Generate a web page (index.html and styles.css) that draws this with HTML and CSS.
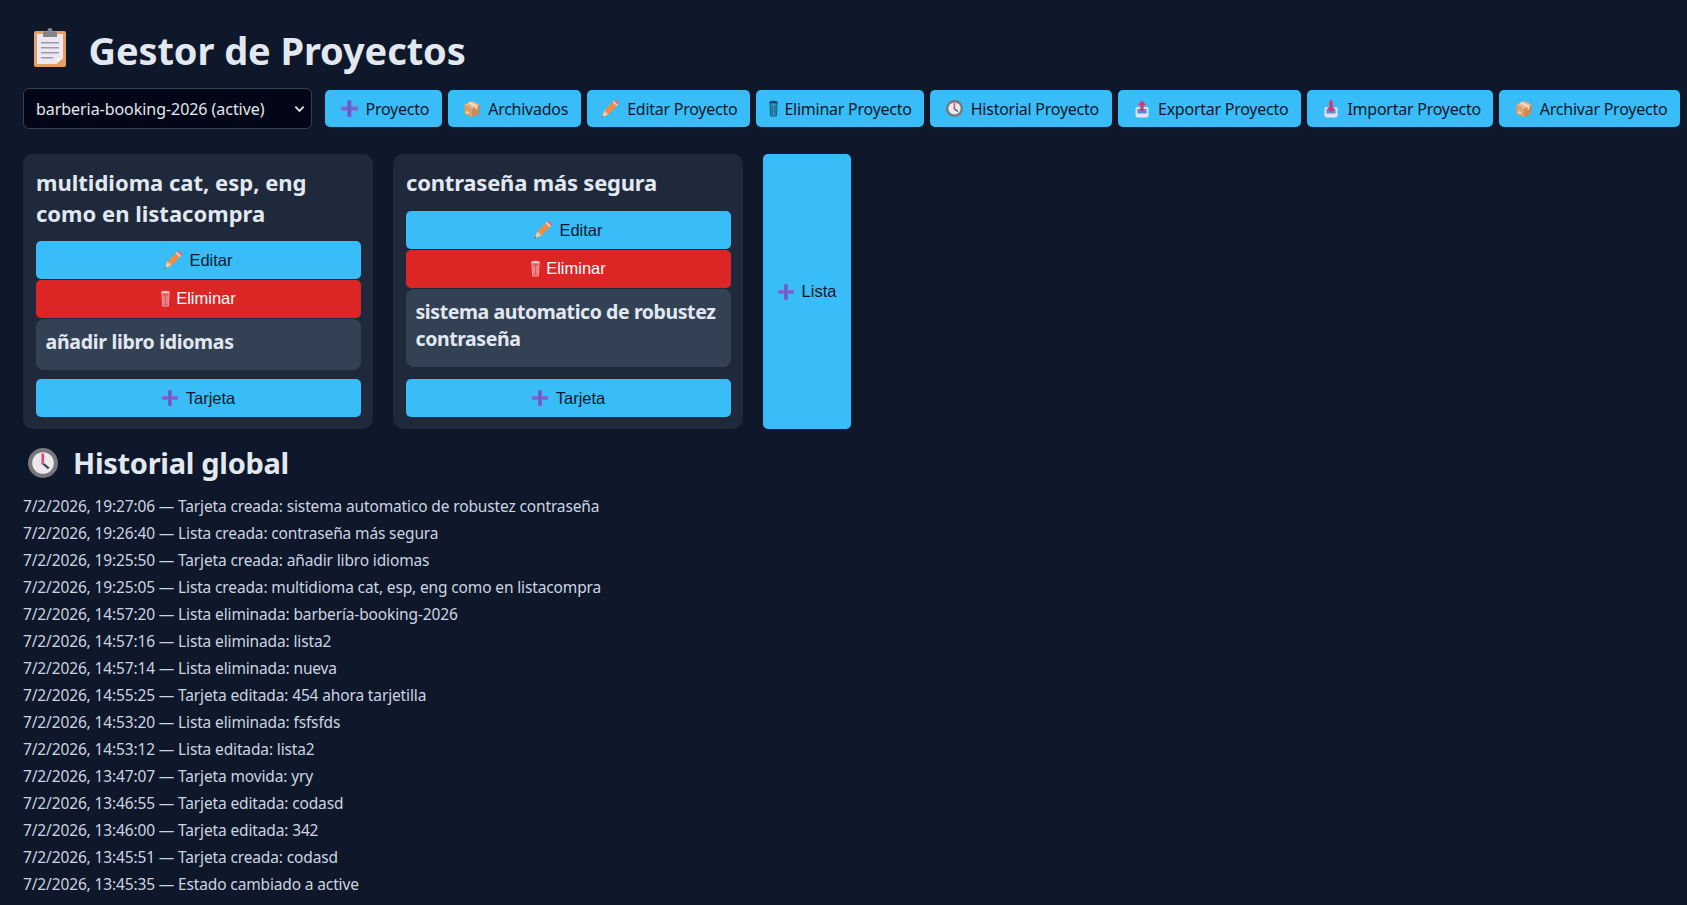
FILE: index.html
```html
<!DOCTYPE html>
<html lang="es">
<head>
<meta charset="utf-8">
<title>Gestor de Proyectos</title>
<link rel="stylesheet" href="styles.css">
</head>
<body>
<svg class="defs" width="0" height="0" aria-hidden="true">
  <symbol id="i-plus" viewBox="0 0 16 16">
    <rect x="0" y="6" width="16" height="4" fill="#8470d8"/>
    <rect x="6" y="0" width="4" height="16" fill="#7a68d4"/>
    <rect x="6.800" y="1" width="1.600" height="14" fill="#5a58c4"/>
    <rect x="1" y="7.400" width="14" height="1.400" fill="#6660cc"/>
  </symbol>
  <symbol id="i-box" viewBox="0 0 16 18">
    <path d="M8 1 15.500 4.800v8.600L8 17.400.5 13.400V4.800Z" fill="#c98a55"/>
    <path d="M8 1 15.500 4.800 8 9 .5 4.800Z" fill="#e8b98c"/>
    <path d="M8 9v8.400L.5 13.400V4.800Z" fill="#dba26d"/>
    <path d="M4 2.900 11.600 7v3l1.800-1V6L5.800 2Z" fill="#f5e3cf"/>
    <rect x="2" y="11.500" width="3" height="2" fill="#f3ddc4" transform="rotate(28 3.500 12.500)"/>
  </symbol>
  <symbol id="i-pencil" viewBox="0 0 17 17">
    <path d="M3.200 10 11 2.200 14.800 6 7 13.800Z" fill="#f58b3c"/>
    <path d="M3.200 10 7 13.800.4 16.600Z" fill="#f7c99a"/>
    <path d="M1.200 14.600 2.400 15.800.4 16.600Z" fill="#6b4a3a"/>
    <path d="M11 2.200 12.400 .8 16.200 4.600 14.800 6Z" fill="#f3c3c8"/>
    <path d="M12.400 .8 13 .2Q13.800-.3 14.600 .2L16.800 2.400Q17.300 3.200 16.800 4L16.200 4.600Z" fill="#ec6a5e"/>
  </symbol>
  <symbol id="i-trash" viewBox="0 0 10 18">
    <path d="M.4 1.200Q5-.4 9.600 1.200V3.400H.4Z" fill="currentColor" opacity=".7"/>
    <path d="M1 3.400h8L8.200 17.400H1.800Z" fill="currentColor" opacity=".22"/>
    <path d="M1 3.400 1.800 17.400H8.200L9 3.400" fill="none" stroke="currentColor" stroke-width=".9" opacity=".65"/>
    <path d="M3.400 5.500v10M6.600 5.500v10" stroke="currentColor" stroke-width=".9" opacity=".65"/>
  </symbol>
  <symbol id="i-clock" viewBox="0 0 30 30">
    <circle cx="15" cy="15" r="15" fill="#77787e"/>
    <circle cx="15" cy="15" r="10.800" fill="#ece8ec"/>
    <rect x="13.500" y="5.500" width="2.600" height="10" fill="#e0447a"/>
    <path d="M14.600 14 21.500 19.600 20 21.200 13.400 15.600Z" fill="#3c3f52"/>
    <circle cx="14.800" cy="15" r="1.600" fill="#8d8f96"/>
  </symbol>
  <symbol id="i-out" viewBox="0 0 16 18">
    <path d="M1.500 8.500Q1.500 7 3 7h10Q14.500 7 14.500 8.500v7Q14.500 17.500 12.500 17.500h-9Q1.500 17.500 1.500 15.500Z" fill="#e4dff0"/>
    <path d="M3.500 9h9v4.500h-9Z" fill="#5b86d2"/>
    <path d="M8 .5 12 5H9.600v6H6.400V5H4Z" fill="#d9316b"/>
  </symbol>
  <symbol id="i-in" viewBox="0 0 16 18">
    <path d="M1.500 8.500Q1.500 7 3 7h10Q14.500 7 14.500 8.500v7Q14.500 17.500 12.500 17.500h-9Q1.500 17.500 1.500 15.500Z" fill="#e4dff0"/>
    <path d="M3.500 9h9v4.500h-9Z" fill="#5b86d2"/>
    <path d="M6.400 .5h3.200v7H12L8 12 4 7.500h2.400Z" fill="#d9316b"/>
  </symbol>
  <symbol id="i-clip" viewBox="0 0 32 39">
    <rect x="0" y="3" width="32" height="36" rx="2" fill="#e2a066"/>
    <path d="M3 6h26v24l-7 6H3Z" fill="#ebe7f3"/>
    <path d="M22 36l1-6h6Z" fill="#f8f3ea"/>
    <path d="M9 5Q9 3.500 11 3.500h2.500V2Q13.500 0 16 0t2.500 2v1.500H21Q23 3.500 23 5v4H9Z" fill="#85828c"/>
    <path d="M7 14h18v1.600H7ZM7 19h18v1.600H7ZM7 24h18v1.600H7ZM7 29h12v1.600H7Z" fill="#9d9aa8"/>
  </symbol>
</svg>

<main class="app">
  <h1 class="title"><svg class="title-icon"><use href="#i-clip"/></svg>Gestor de Proyectos</h1>

  <div class="toolbar">
    <select class="project-select">
      <option>barberia-booking-2026 (active)</option>
    </select>
    <button class="btn"><span class="ico"><svg class="s-plus"><use href="#i-plus"/></svg></span>Proyecto</button>
    <button class="btn"><span class="ico"><svg class="s-box"><use href="#i-box"/></svg></span>Archivados</button>
    <button class="btn"><span class="ico"><svg class="s-pencil"><use href="#i-pencil"/></svg></span>Editar Proyecto</button>
    <button class="btn btn-trash"><span class="ico ico-narrow"><svg class="s-trash"><use href="#i-trash"/></svg></span>Eliminar Proyecto</button>
    <button class="btn"><span class="ico"><svg class="s-clock"><use href="#i-clock"/></svg></span>Historial Proyecto</button>
    <button class="btn"><span class="ico"><svg class="s-box"><use href="#i-out"/></svg></span>Exportar Proyecto</button>
    <button class="btn"><span class="ico"><svg class="s-box"><use href="#i-in"/></svg></span>Importar Proyecto</button>
    <button class="btn"><span class="ico"><svg class="s-box"><use href="#i-box"/></svg></span>Archivar Proyecto</button>
  </div>

  <section class="board">
    <article class="column">
      <h3 class="column-title">multidioma cat, esp, eng como en listacompra</h3>
      <button class="cbtn"><svg class="c-pencil"><use href="#i-pencil"/></svg>Editar</button>
      <button class="cbtn cbtn-danger"><svg class="c-trash"><use href="#i-trash"/></svg>Eliminar</button>
      <div class="card">añadir libro idiomas</div>
      <button class="cbtn cbtn-add"><svg class="c-plus"><use href="#i-plus"/></svg>Tarjeta</button>
    </article>
    <article class="column">
      <h3 class="column-title column-title-single">contraseña más segura</h3>
      <button class="cbtn"><svg class="c-pencil"><use href="#i-pencil"/></svg>Editar</button>
      <button class="cbtn cbtn-danger"><svg class="c-trash"><use href="#i-trash"/></svg>Eliminar</button>
      <div class="card card-tight">sistema automatico de robustez contraseña</div>
      <button class="cbtn cbtn-add"><svg class="c-plus"><use href="#i-plus"/></svg>Tarjeta</button>
    </article>
    <button class="cbtn add-list"><svg class="c-plus"><use href="#i-plus"/></svg>Lista</button>
  </section>

  <h2 class="history-title"><svg class="history-icon"><use href="#i-clock"/></svg>Historial global</h2>
  <ul class="history">
    <li>7/2/2026, 19:27:06 — Tarjeta creada: sistema automatico de robustez contraseña</li>
    <li>7/2/2026, 19:26:40 — Lista creada: contraseña más segura</li>
    <li>7/2/2026, 19:25:50 — Tarjeta creada: añadir libro idiomas</li>
    <li>7/2/2026, 19:25:05 — Lista creada: multidioma cat, esp, eng como en listacompra</li>
    <li>7/2/2026, 14:57:20 — Lista eliminada: barbería-booking-2026</li>
    <li>7/2/2026, 14:57:16 — Lista eliminada: lista2</li>
    <li>7/2/2026, 14:57:14 — Lista eliminada: nueva</li>
    <li>7/2/2026, 14:55:25 — Tarjeta editada: 454 ahora tarjetilla</li>
    <li>7/2/2026, 14:53:20 — Lista eliminada: fsfsfds</li>
    <li>7/2/2026, 14:53:12 — Lista editada: lista2</li>
    <li>7/2/2026, 13:47:07 — Tarjeta movida: yry</li>
    <li>7/2/2026, 13:46:55 — Tarjeta editada: codasd</li>
    <li>7/2/2026, 13:46:00 — Tarjeta editada: 342</li>
    <li>7/2/2026, 13:45:51 — Tarjeta creada: codasd</li>
    <li>7/2/2026, 13:45:35 — Estado cambiado a active</li>
  </ul>
</main>
</body>
</html>
```
FILE: styles.css
```css
* { box-sizing: border-box; }
html, body { height: 100%; }
body {
  margin: 0;
  background: #0f172a;
  color: #e2e8f0;
  font-family: "Noto Sans", "Open Sans", sans-serif;
  overflow: hidden;
}
.defs { position: absolute; }
.app { padding: 0 5px 0 23px; }

.title {
  display: flex;
  align-items: center;
  margin: 0;
  height: 88px;
  padding: 11px 0 0 11px;
  font-size: 38px;
  font-weight: 700;
  letter-spacing: -0.1px;
  color: #e2e8f0;
}
.title-icon { width: 32px; height: 39px; margin: -4px 22.500px 0 0; flex: none; }

.toolbar { display: flex; align-items: center; gap: 6px; height: 41px; }
.project-select {
  appearance: none;
  width: 289px;
  height: 41px;
  margin-right: 7px;
  padding: 0 12px;
  background: #020617 url("data:image/svg+xml,%3Csvg xmlns='http://www.w3.org/2000/svg' viewBox='0 0 12 8'%3E%3Cpath d='M1.500 1.500 6 6l4.500-4.500' fill='none' stroke='%23e2e8f0' stroke-width='2'/%3E%3C/svg%3E") no-repeat right 6px center / 11px 8px;
  color: #e2e8f0;
  border: 1px solid #334155;
  border-radius: 6px;
  font: 16px "Noto Sans", sans-serif;
  letter-spacing: -0.05px;
  flex: none;
}
.btn {
  display: flex;
  align-items: center;
  height: 37px;
  padding: 0 12.500px;
  background: #38bdf8;
  color: #0f172a;
  border: 0;
  border-radius: 5px;
  font: 16px "Noto Sans", sans-serif;
  letter-spacing: -0.25px;
  white-space: nowrap;
  flex: none;
}
.ico {
  display: flex;
  align-items: center;
  justify-content: flex-end;
  width: 20px;
  margin-right: 8px;
  flex: none;
}
.ico-narrow { width: 10px; margin-right: 6px; }
.s-plus { width: 17px; height: 17px; }
.s-box { width: 16px; height: 18px; }
.s-pencil { width: 18px; height: 18px; }
.s-trash { width: 9px; height: 17px; }
.s-clock { width: 17px; height: 17px; }

.board { display: flex; align-items: stretch; gap: 20px; margin-top: 25px; }
.column {
  display: flex;
  flex-direction: column;
  width: 350px;
  padding: 13px 12px 12px 13px;
  background: #1e293b;
  border-radius: 10px;
}
.column-title {
  margin: 0 0 12px;
  font-size: 22px;
  font-weight: 700;
  line-height: 31px;
  color: #e2e8f0;
}
.column-title-single { margin-bottom: 13px; letter-spacing: -0.2px; }
.cbtn {
  display: flex;
  align-items: center;
  justify-content: center;
  height: 38px;
  margin-bottom: 0.750px;
  padding: 0;
  background: #38bdf8;
  color: #0f172a;
  border: 0;
  border-radius: 5px;
  font: 16.500px "Liberation Sans", Arial, sans-serif;
  flex: none;
}
.cbtn-danger { background: #dc2626; color: #fff; }
.cbtn-add { margin: auto 0 0; }
.c-pencil { width: 18px; height: 18px; margin-right: 7px; }
.c-trash { width: 9px; height: 17px; margin-right: 6px; }
.c-plus { width: 16px; height: 16px; margin-right: 8px; }
.card {
  margin-bottom: 9.500px;
  padding: 9.500px 9.500px 14.500px;
  background: #334155;
  border-radius: 8px;
  font-size: 19.500px;
  font-weight: 700;
  line-height: 27px;
  letter-spacing: -0.3px;
  color: #e2e8f0;
}
.card-tight { letter-spacing: -0.42px; }
.add-list { width: 88px; height: auto; margin: 0; }

.history-title {
  display: flex;
  align-items: center;
  margin: 17px 0 0;
  height: 33px;
  padding-left: 5px;
  font-size: 29px;
  font-weight: 700;
  letter-spacing: -0.3px;
  color: #e2e8f0;
}
.history-icon { width: 30px; height: 30px; margin-right: 15px; flex: none; }
.history {
  margin: 14px 0 0;
  padding: 0;
  list-style: none;
  font-size: 15.500px;
  line-height: 27px;
  letter-spacing: -0.14px;
  color: #cbd5e1;
}
```
